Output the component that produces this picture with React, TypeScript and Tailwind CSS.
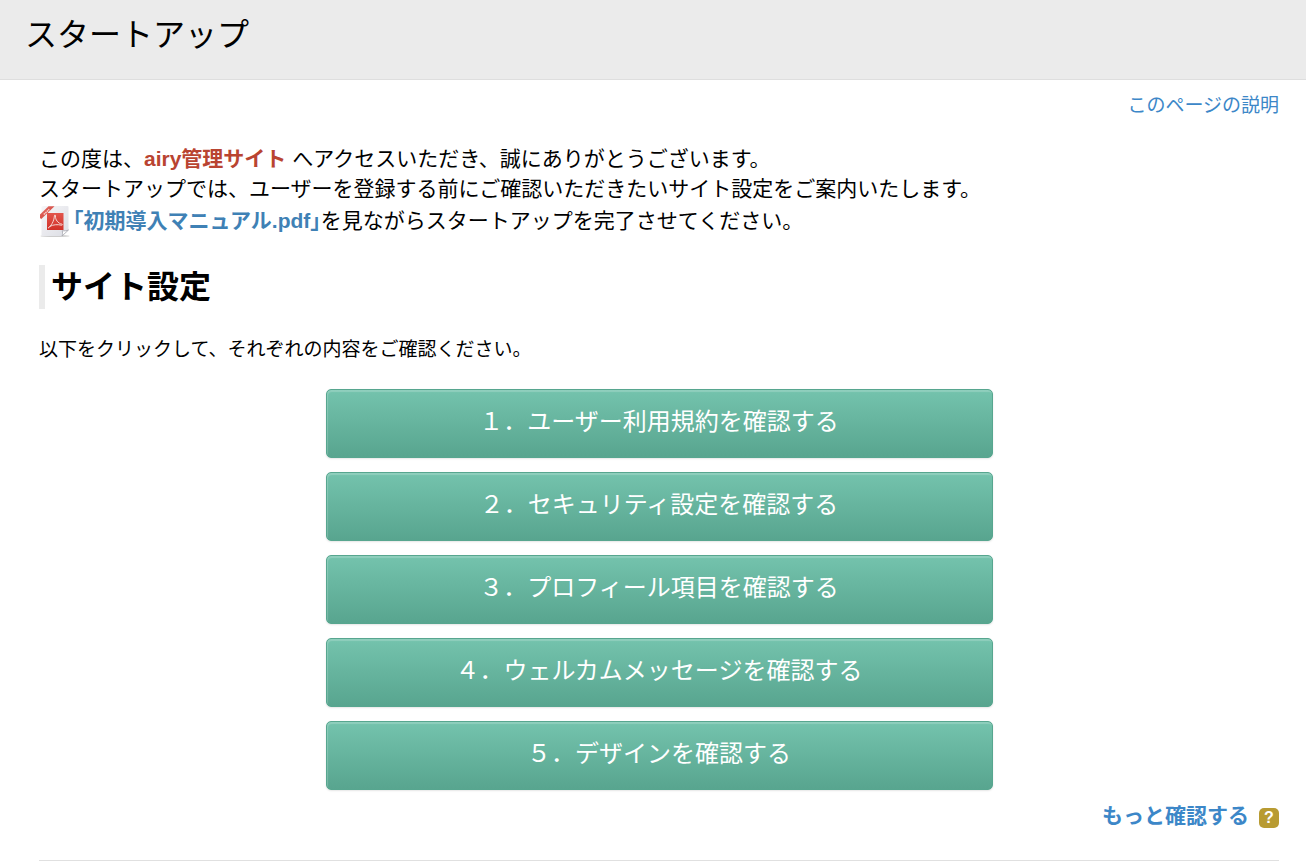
type Step = {
  id: string;
  label: string;
};

const steps: Step[] = [
  { id: 'terms', label: '１．ユーザー利用規約を確認する' },
  { id: 'security', label: '２．セキュリティ設定を確認する' },
  { id: 'profile', label: '３．プロフィール項目を確認する' },
  { id: 'welcome', label: '４．ウェルカムメッセージを確認する' },
  { id: 'design', label: '５．デザインを確認する' },
];

function PdfIcon() {
  return (
    <svg className="h-8 w-8 shrink-0" viewBox="0 0 32 32" aria-hidden="true">
      <defs>
        <linearGradient id="paper" x1="0" y1="0" x2="1" y2="1">
          <stop offset="0" stopColor="#f6f6f8" />
          <stop offset="1" stopColor="#dcdde4" />
        </linearGradient>
        <linearGradient id="badge" x1="0" y1="0" x2="0" y2="1">
          <stop offset="0" stopColor="#e2554c" />
          <stop offset="1" stopColor="#d13029" />
        </linearGradient>
        <linearGradient id="ribbon" x1="0" y1="0" x2="1" y2="1">
          <stop offset="0" stopColor="#e8736b" />
          <stop offset="1" stopColor="#c9352d" />
        </linearGradient>
      </defs>
      <ellipse cx="16" cy="31" rx="14.500" ry="1" fill="#cdcdcd" />
      <path d="M4 1h24.500a1 1 0 0 1 1 1v23l-6.500 6H3.500a1 1 0 0 1-1-1V2z" fill="url(#paper)" />
      <path d="M29.500 25l-6.500 6c.8-2 .7-3.500.2-5.300c2.200.4 4.300.2 6.300-.7z" fill="#fff" stroke="#a5a6ad" strokeWidth="0.8" />
      <path d="M8 8h16.500v17H8z" fill="url(#badge)" />
      <path d="M1 12.500V9.500L9.500 1.200h6L2 14.200z" fill="url(#ribbon)" />
      <path d="M4.800 9.500l5.500-5.200" stroke="#f8c6c2" strokeWidth="1.600" strokeDasharray="1.600 .5" />
      <path
        d="M9.300 22.800c2.600-1.600 5.700-6.300 6.100-11.900c.1-1.300 1.200-1.300 1.100.1c-.4 3.500 2.500 7.400 6.300 8.100c1 .3.700 1.300-.4 1.100c-3.600-1-8.300-.6-11.300 1.100c-1.200 1.500-1.900 2-1.800 1.500z"
        fill="none"
        stroke="#f6e4e2"
        strokeWidth="0.9"
      />
    </svg>
  );
}

export default function App() {
  return (
    <div className="bg-white text-black font-['Liberation_Sans','Noto_Sans_CJK_JP',sans-serif]">
      <header className="h-20 border-b border-[#dedede] bg-[#ebebeb] px-[25px] pt-[11px]">
        <h1 className="text-[32px] leading-[48px]">スタートアップ</h1>
      </header>

      <main className="pr-[27px] pl-[39px]">
        <div className="flex justify-end pt-[11px]">
          <a href="#help" className="text-[19px] leading-[30px] text-[#3c87c8]">このページの説明</a>
        </div>

        <div className="mt-[23px] text-[21px] leading-[30px]">
          <p>
            この度は、<strong className="text-[#b94431]">airy管理サイト</strong> へアクセスいただき、誠にありがとうございます。
          </p>
          <p>スタートアップでは、ユーザーを登録する前にご確認いただきたいサイト設定をご案内いたします。</p>
          <p className="flex items-center">
            <a href="#manual" className="flex items-center gap-0.5 pt-px font-bold text-[#3f81b5]">
              <PdfIcon />
              ｢初期導入マニュアル.pdf｣
            </a>
            を見ながらスタートアップを完了させてください。
          </p>
        </div>

        <h2 className="mt-7 border-l-[6px] border-[#ebebeb] pl-1.5 text-[32px] leading-[44px] font-bold">サイト設定</h2>
        <p className="mt-[26px] text-[19px] leading-[30px]">以下をクリックして、それぞれの内容をご確認ください。</p>

        <div className="mx-auto mt-6 flex w-full max-w-[667px] flex-col gap-3.5">
          {steps.map(step => (
            <button
              key={step.id}
              type="button"
              className="h-[69px] rounded-[5px] border border-[#57a68f] bg-linear-to-b from-[#74c3ad] to-[#58a58f] pb-1 text-2xl text-white shadow-[inset_1px_2px_1px_rgba(255,255,255,0.2),0_1px_2px_rgba(0,0,0,0.1)]"
            >
              {step.label}
            </button>
          ))}
        </div>

        <div className="mt-2.5 flex items-center justify-end gap-2.5">
          <a href="#more" className="text-[21px] leading-[32px] font-bold text-[#3c87c8]">もっと確認する</a>
          <button
            type="button"
            aria-label="ヘルプ"
            className="mt-1 h-5 w-5 rounded-[5px] bg-[#b89b32] text-base leading-5 font-bold text-white"
          >
            ?
          </button>
        </div>
        <hr className="mt-7 border-[#e0e0e0]" />
      </main>
    </div>
  );
}
